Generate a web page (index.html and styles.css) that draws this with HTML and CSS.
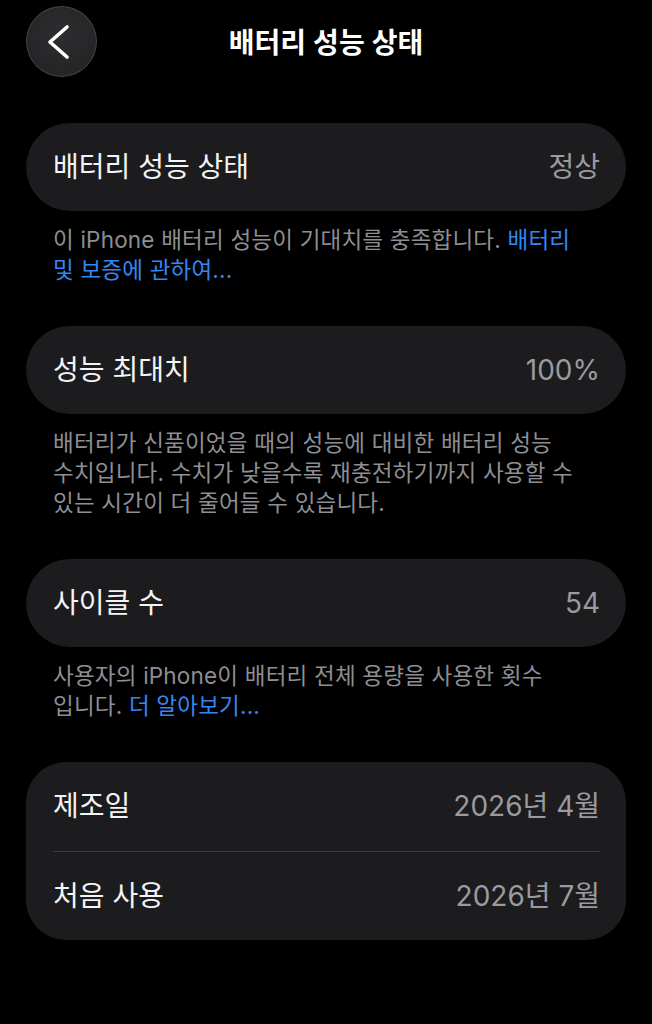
FILE: index.html
```html
<!DOCTYPE html>
<html lang="ko">
<head>
<meta charset="utf-8">
<title>배터리 성능 상태</title>
<link rel="stylesheet" href="styles.css">
</head>
<body>
<header class="nav">
  <button class="back" aria-label="뒤로">
    <svg width="36" height="36" viewBox="0 0 36 36" aria-hidden="true">
      <path d="M24 3 L7 18 L24 33" fill="none" stroke="#ffffff" stroke-width="3.6" stroke-linecap="round" stroke-linejoin="round"/>
    </svg>
  </button>
  <h1 class="title">배터리 성능 상태</h1>
</header>

<main class="content">
  <section class="group">
    <div class="card">
      <div class="row"><span class="label">배터리 성능 상태</span><span class="value">정상</span></div>
    </div>
    <p class="note">이 iPhone 배터리 성능이 기대치를 충족합니다. <a class="link">배터리</a> <a class="link">및 보증에 관하여...</a></p>
  </section>

  <section class="group">
    <div class="card">
      <div class="row"><span class="label">성능 최대치</span><span class="value">100%</span></div>
    </div>
    <p class="note">배터리가 신품이었을 때의 성능에 대비한 배터리 성능 수치입니다. 수치가 낮을수록 재충전하기까지 사용할 수 있는 시간이 더 줄어들 수 있습니다.</p>
  </section>

  <section class="group">
    <div class="card">
      <div class="row"><span class="label">사이클 수</span><span class="value">54</span></div>
    </div>
    <p class="note">사용자의 iPhone이 배터리 전체 용량을 사용한 횟수<br>입니다. <a class="link">더 알아보기...</a></p>
  </section>

  <section class="group">
    <div class="card card-list">
      <div class="row"><span class="label">제조일</span><span class="value">2026년 4월</span></div>
      <div class="divider"></div>
      <div class="row"><span class="label">처음 사용</span><span class="value">2026년 7월</span></div>
    </div>
  </section>
</main>
</body>
</html>
```

FILE: styles.css
```css
* { box-sizing: border-box; }

html, body {
  margin: 0;
  padding: 0;
  background: #000000;
}

body {
  width: 652px;
  min-height: 1024px;
  font-family: Inter, "Noto Sans CJK KR", "Noto Sans", sans-serif;
  color: #f2f2f4;
  -webkit-font-smoothing: antialiased;
}

.nav {
  position: relative;
  height: 77px;
  padding-top: 6px;
  display: flex;
  align-items: center;
  justify-content: center;
}

.back {
  position: absolute;
  left: 26px;
  top: 6px;
  width: 71px;
  height: 71px;
  border-radius: 50%;
  border: 1px solid rgba(255, 255, 255, 0.14);
  background: radial-gradient(circle at 50% 40%, #2e2e30 0%, #252527 70%, #2a2a2c 100%);
  display: flex;
  align-items: center;
  justify-content: center;
  padding: 0;
  cursor: pointer;
}

.back svg {
  margin-left: -2px;
}

.title {
  margin: 0;
  font-size: 28px;
  font-weight: 600;
  color: #ffffff;
  line-height: 1;
  padding-top: 2px;
}

.content {
  padding: 46px 26px 0 26px;
  display: flex;
  flex-direction: column;
  gap: 41px;
}

.card {
  background: #1c1c1e;
  border-radius: 44px;
  padding: 0 26px 0 27px;
}

.card-list {
  border-radius: 40px;
}

.row {
  height: 88px;
  display: flex;
  align-items: center;
  justify-content: space-between;
}

.card-list .row {
  height: 88.5px;
}

.label {
  font-size: 28px;
  color: #f4f4f6;
  line-height: 1;
}

.value {
  font-size: 28px;
  color: #9a9a9f;
  line-height: 1;
}

.divider {
  height: 1px;
  background: #3a3a3c;
}

.note {
  margin: 14px 0 0 0;
  padding: 0 30px 0 27px;
  font-size: 22.5px;
  letter-spacing: 0.2px;
  line-height: 30px;
  color: #8e8e93;
  word-break: keep-all;
}

.link {
  color: #3387f2;
  text-decoration: none;
}
```
